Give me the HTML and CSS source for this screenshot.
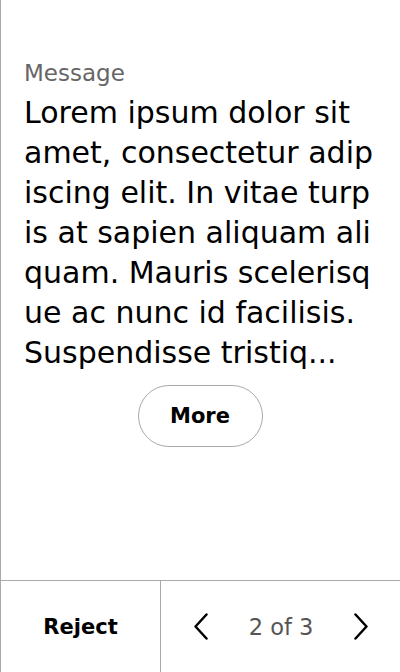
FILE: index.html
```html
<!DOCTYPE html>
<html>
<head>
<meta charset="utf-8">
<link rel="stylesheet" href="styles.css">
</head>
<body>
<div class="screen">
  <main class="content">
    <div class="label">Message</div>
    <p class="message">Lorem ipsum dolor sit amet, consectetur adipiscing elit. In vitae turpis at sapien aliquam aliquam. Mauris scelerisque ac nunc id facilisis. Suspendisse tristiq...</p>
    <div class="more-row"><button class="more">More</button></div>
  </main>
  <footer class="footer">
    <button class="reject">Reject</button>
    <div class="pager">
      <button class="chev" aria-label="Previous"><svg width="14" height="27" viewBox="0 0 14 27"><path d="M12.5 1.5 L1.5 13.5 L12.5 25.5" fill="none" stroke="#000" stroke-width="2.5" stroke-linecap="round" stroke-linejoin="round"/></svg></button>
      <span class="count">2 of 3</span>
      <button class="chev" aria-label="Next"><svg width="14" height="27" viewBox="0 0 14 27"><path d="M1.5 1.5 L12.5 13.5 L1.5 25.5" fill="none" stroke="#000" stroke-width="2.5" stroke-linecap="round" stroke-linejoin="round"/></svg></button>
    </div>
  </footer>
</div>
</body>
</html>
```

FILE: styles.css
```css
html, body {
  margin: 0;
  padding: 0;
  background: #fff;
}
body {
  font-family: "DejaVu Sans", sans-serif;
  color: #000;
}
.screen {
  width: 400px;
  height: 672px;
  box-sizing: border-box;
  border-left: 1px solid #aaa;
  display: flex;
  flex-direction: column;
}
.content {
  flex: 1;
  padding: 59px 24px 0 23px;
}
.label {
  font-size: 23px;
  line-height: 28px;
  color: #666;
}
.message {
  margin: 6px 0 0;
  font-size: 30px;
  line-height: 40px;
  word-break: break-all;
}
.more-row {
  display: flex;
  justify-content: center;
  margin-top: 12px;
}
.more {
  width: 125px;
  height: 62px;
  box-sizing: border-box;
  border: 1px solid #aaa;
  border-radius: 31px;
  background: #fff;
  font-family: inherit;
  font-size: 21px;
  font-weight: 700;
  color: #000;
  padding: 0;
}
.footer {
  height: 92px;
  box-sizing: border-box;
  border-top: 1px solid #aaa;
  display: grid;
  grid-template-columns: 160px 1fr;
}
.reject {
  border: 0;
  border-right: 1px solid #aaa;
  background: #fff;
  font-family: inherit;
  font-size: 21px;
  font-weight: 700;
  color: #000;
  padding: 0;
}
.pager {
  display: flex;
  align-items: center;
  justify-content: space-between;
  padding: 0 32px 0 33px;
}
.chev {
  border: 0;
  background: none;
  padding: 0;
  display: flex;
  align-items: center;
  justify-content: center;
}
.count {
  font-size: 22.5px;
  color: #555;
}
```
